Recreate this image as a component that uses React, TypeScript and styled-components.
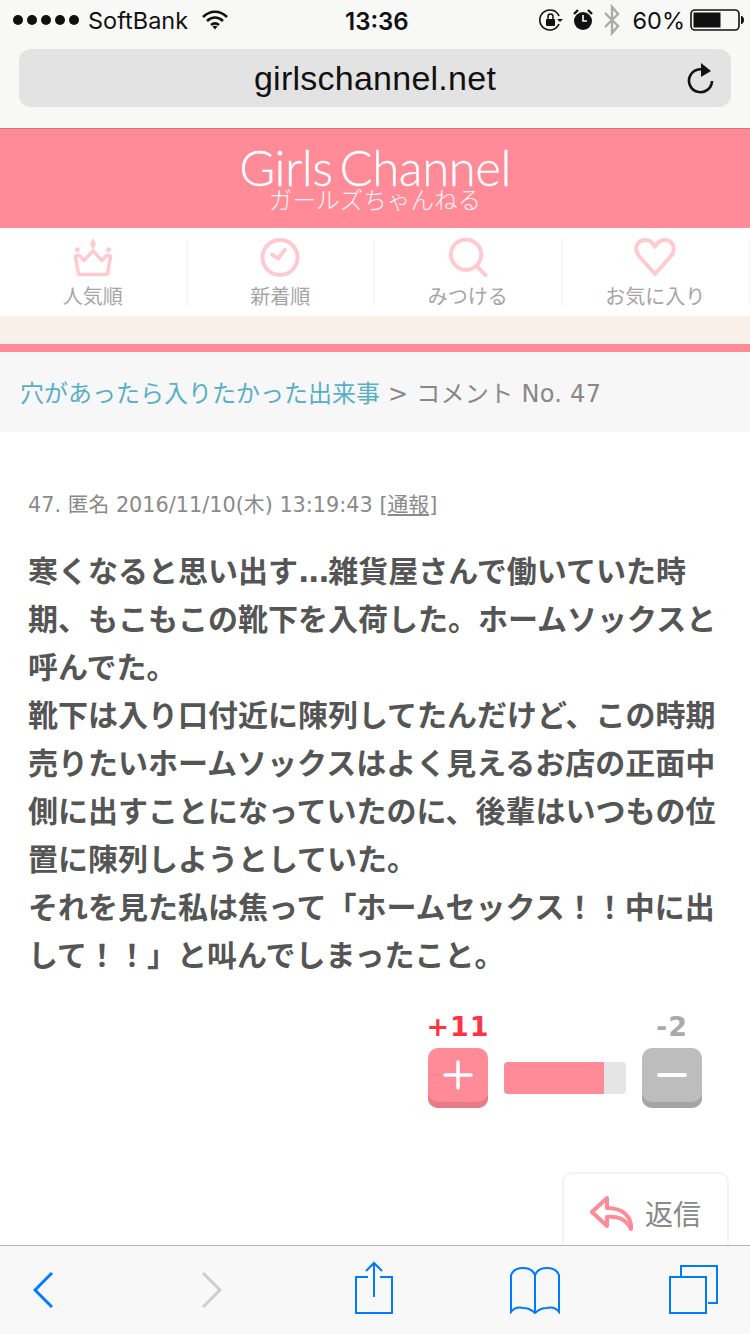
import React from "react";
import styled, { createGlobalStyle } from "styled-components";

const GlobalStyle = createGlobalStyle`
  html, body { margin: 0; padding: 0; background: #fff; }
  body { font-family: "DejaVu Sans", "Noto Sans CJK JP", sans-serif; }
`;

const Phone = styled.div`
  width: 750px;
  height: 1334px;
  display: flex;
  flex-direction: column;
  overflow: hidden;
`;

const BrowserTop = styled.header`
  height: 128px;
  background: #f8f8f6;
  flex: none;
`;

const StatusBar = styled.div`
  height: 40px;
  padding: 0 5px 0 13px;
  display: flex;
  align-items: center;
  position: relative;
  font-family: "Inter", "Liberation Sans", sans-serif;
  font-size: 23.5px;
  color: #111;
`;

const Signal = styled.div`
  display: flex;
  gap: 4px;
  margin-right: 9px;
`;

const Dot = styled.span`
  width: 10px;
  height: 10px;
  border-radius: 50%;
  background: #111;
`;

const Carrier = styled.span`
  width: 114px;
`;

const Clock = styled.span`
  position: absolute;
  left: 345px;
  top: 7px;
  font-weight: 600;
  font-size: 24px;
`;

const StatusRight = styled.div`
  margin-left: auto;
  display: flex;
  align-items: center;
`;

const Percent = styled.span`
  margin: 0 5px 0 12px;
`;

const AddressBar = styled.div`
  margin: 9px 19px 0;
  height: 58px;
  border-radius: 12px;
  background: #e3e3e3;
  display: flex;
  align-items: center;
  justify-content: center;
  position: relative;
  font-family: "Liberation Sans", sans-serif;
  font-size: 34px;
  letter-spacing: 0.25px;
  color: #111;
`;

const Reload = styled.svg`
  position: absolute;
  right: 16px;
  top: 12px;
`;

const Main = styled.main`
  flex: 1;
  min-height: 0;
  overflow: hidden;
`;

const Brand = styled.div`
  height: 100px;
  box-sizing: border-box;
  border-top: 1px solid #d9707d;
  background: #ff8b98;
  color: #fff;
  display: flex;
  flex-direction: column;
  align-items: center;
`;

const Logo = styled.div`
  font-family: "Lato", sans-serif;
  font-weight: 300;
  font-size: 49px;
  line-height: 40px;
  letter-spacing: -0.4px;
  word-spacing: -6px;
  margin-top: 18px;
  -webkit-text-stroke: 0.3px #fff;
`;

const LogoKana = styled.div`
  font-family: "Noto Sans CJK JP", sans-serif;
  font-weight: 300;
  font-size: 23.6px;
  line-height: 26px;
  margin-top: -1px;
  opacity: 0.9;
`;

const Nav = styled.nav`
  height: 88px;
  display: grid;
  grid-template-columns: repeat(4, 1fr);
  background: #fff;
`;

const NavItem = styled.div`
  height: 68px;
  margin-top: 10px;
  border-right: 2px solid #f8f8f8;
  display: flex;
  flex-direction: column;
  align-items: center;
  font-family: "Noto Sans CJK JP", sans-serif;
  font-size: 20px;
  line-height: 20px;
  color: #a5a5a5;
`;

const NavLabel = styled.span`
  margin-top: 9px;
`;

const CreamBand = styled.div`
  height: 28px;
  background: #f9f1e9;
`;

const PinkRule = styled.div`
  height: 8px;
  background: #ff8b98;
`;

const Breadcrumb = styled.div`
  height: 80px;
  box-sizing: border-box;
  padding: 24px 0 0 20px;
  background: #f7f7f7;
  font-size: 24px;
  line-height: 36px;
  color: #888;
  white-space: nowrap;
  letter-spacing: 0.3px;
`;

const TopicLink = styled.span`
  color: #5aafc8;
  letter-spacing: 0;
`;

const Comment = styled.section`
  padding: 56px 0 0 28px;
`;

const Meta = styled.div`
  font-size: 20.8px;
  line-height: 34px;
  color: #8a8a8a;
  white-space: nowrap;
`;

const Report = styled.span`
  text-decoration: underline;
`;

const Body = styled.div`
  margin-top: 26px;
  font-size: 30px;
  font-weight: 700;
  line-height: 48px;
  color: #555;
  white-space: nowrap;
`;

const Ellipsis = styled.span`
  letter-spacing: -1.3px;
`;

const Votes = styled.div`
  margin: 28px 48px 0 0;
  display: flex;
  justify-content: flex-end;
  align-items: flex-end;
  gap: 16px;
`;

const VoteColumn = styled.div`
  width: 60px;
  display: flex;
  flex-direction: column;
  align-items: center;
`;

const VoteCount = styled.span<{ $color: string }>`
  font-family: "DejaVu Sans", sans-serif;
  font-weight: 700;
  font-size: 27px;
  line-height: 38px;
  padding-bottom: 2px;
  letter-spacing: 1px;
  color: ${(p) => p.$color};
  white-space: nowrap;
`;

const VoteButton = styled.div<{ $face: string; $edge: string }>`
  width: 60px;
  height: 60px;
  box-sizing: border-box;
  padding-bottom: 6px;
  border-radius: 10px;
  background: ${(p) => p.$face};
  box-shadow: inset 0 -6px 0 ${(p) => p.$edge};
  display: flex;
  align-items: center;
  justify-content: center;
`;

const Meter = styled.div`
  width: 122px;
  height: 32px;
  margin-bottom: 14px;
  border-radius: 4px;
  overflow: hidden;
  background: #e5e5e5;
`;

const MeterFill = styled.div`
  height: 100%;
  background: #ff8b98;
`;

const ReplyRow = styled.div`
  margin: 64px 21px 0 0;
  display: flex;
  justify-content: flex-end;
`;

const ReplyButton = styled.div`
  width: 167px;
  height: 100px;
  box-sizing: border-box;
  border: 2px solid #f3f3f3;
  border-radius: 10px;
  padding: 19px 0 0 26px;
  display: flex;
  align-items: flex-start;
  gap: 11px;
  font-family: "Noto Sans CJK JP", sans-serif;
  font-size: 28px;
  line-height: 40px;
  color: #888;
`;

const ReplyIcon = styled.svg`
  margin-top: 3px;
  flex: none;
`;

const Toolbar = styled.footer`
  height: 89px;
  flex: none;
  box-sizing: border-box;
  border-top: 1px solid #b2b2b2;
  background: #f8f8f8;
  display: flex;
  align-items: flex-start;
`;

const ToolIcon = styled.svg<{ $gap: number; $top: number }>`
  margin-left: ${(p) => p.$gap}px;
  margin-top: ${(p) => p.$top}px;
  flex: none;
`;

const Crown = () => (
  <svg width="42" height="40" viewBox="0 0 42 40">
    <path d="M21 0l3 6-3 6-3-6z" fill="#ffc9cf" />
    <circle cx="5" cy="12" r="2.500" fill="#ffc9cf" />
    <circle cx="37" cy="12" r="2.500" fill="#ffc9cf" />
    <path d="M3 19c3-2 5-1 6 1l3 3 9-10 9 10 3-3c1-2 3-3 6-1l-3 17c0 1-1 1.500-2 1.500H8c-1 0-2-.5-2-1.500z" fill="none" stroke="#ffc9cf" strokeWidth="3.500" strokeLinejoin="round" />
  </svg>
);

const ClockIcon = () => (
  <svg width="42" height="40" viewBox="0 0 42 40">
    <circle cx="21" cy="20" r="18" fill="none" stroke="#ffc9cf" strokeWidth="4" />
    <path d="M13 17l6 4 7-9" fill="none" stroke="#ffc9cf" strokeWidth="4" strokeLinecap="round" strokeLinejoin="round" />
  </svg>
);

const SearchIcon = () => (
  <svg width="42" height="40" viewBox="0 0 42 40">
    <circle cx="19" cy="17" r="15.500" fill="none" stroke="#ffc9cf" strokeWidth="4" />
    <path d="M30 29l9 9" stroke="#ffc9cf" strokeWidth="4" strokeLinecap="round" />
  </svg>
);

const HeartIcon = () => (
  <svg width="44" height="40" viewBox="0 0 44 40">
    <path d="M22 37L6 19C0 12 3 2 12 2c5 0 8 3 10 7 2-4 5-7 10-7 9 0 12 10 6 17z" fill="none" stroke="#ffc9cf" strokeWidth="4" strokeLinejoin="round" />
  </svg>
);

const navItems = [
  { label: "人気順", icon: <Crown /> },
  { label: "新着順", icon: <ClockIcon /> },
  { label: "みつける", icon: <SearchIcon /> },
  { label: "お気に入り", icon: <HeartIcon /> },
];

const commentLines = [
  "期、もこもこの靴下を入荷した。ホームソックスと",
  "呼んでた。",
  "靴下は入り口付近に陳列してたんだけど、この時期",
  "売りたいホームソックスはよく見えるお店の正面中",
  "側に出すことになっていたのに、後輩はいつもの位",
  "置に陳列しようとしていた。",
  "それを見た私は焦って「ホームセックス！！中に出",
  "して！！」と叫んでしまったこと。",
];

export default function App() {
  const plus = 11;
  const minus = 2;
  const barShare = 82;

  return (
    <Phone>
      <GlobalStyle />
      <BrowserTop>
        <StatusBar>
          <Signal>
            {[0, 1, 2, 3, 4].map((i) => (
              <Dot key={i} />
            ))}
          </Signal>
          <Carrier>SoftBank</Carrier>
          <svg width="26" height="20" viewBox="0 0 26 20">
            <path d="M1 7c7-7 17-7 24 0M5 11c5-4.500 11-4.500 16 0M9 15c2.500-2 5.500-2 8 0" fill="none" stroke="#111" strokeWidth="2.600" />
            <path d="M10.500 16.500c1.500-1 3.500-1 5 0L13 19.500z" fill="#111" />
          </svg>
          <Clock>13:36</Clock>
          <StatusRight>
            <svg width="24" height="24" viewBox="0 0 24 24">
              <path d="M20 8A10 10 0 1 0 20 16" fill="none" stroke="#111" strokeWidth="1.600" />
              <path d="M18 11h6l-3 3z" fill="#111" />
              <rect x="7" y="11" width="9" height="7" rx="1" fill="#111" />
              <path d="M9 11V8.500a2.500 2.500 0 0 1 5 0V11" fill="none" stroke="#111" strokeWidth="1.500" />
            </svg>
            <svg width="22" height="24" viewBox="0 0 22 24" style={{ marginLeft: 9 }}>
              <circle cx="11" cy="13" r="9" fill="#111" />
              <path d="M11 7v6h4" fill="none" stroke="#fff" strokeWidth="1.600" />
              <path d="M2 6l4-4M20 6l-4-4" stroke="#111" strokeWidth="2.400" />
            </svg>
            <svg width="18" height="32" viewBox="0 0 18 32" style={{ marginLeft: 9 }}>
              <path d="M2 9l13 13-6 7V3l6 7L2 23" fill="none" stroke="#aaa" strokeWidth="2.400" />
            </svg>
            <Percent>60%</Percent>
            <svg width="55" height="22" viewBox="0 0 55 22">
              <rect x="1" y="1" width="48" height="20" rx="4" fill="none" stroke="#111" strokeWidth="1.600" />
              <rect x="3.500" y="3.500" width="27" height="15" fill="#111" />
              <path d="M51 7c2 0 3 2 3 4s-1 4-3 4z" fill="#111" />
            </svg>
          </StatusRight>
        </StatusBar>
        <AddressBar>
          girlschannel.net
          <Reload width="28" height="34" viewBox="0 0 28 34">
            <path d="M21 11A11.500 11.500 0 1 0 25 20" fill="none" stroke="#111" strokeWidth="2.600" />
            <path d="M14 2l10 8-10 6z" fill="#111" />
          </Reload>
        </AddressBar>
      </BrowserTop>

      <Main>
        <Brand>
          <Logo>Girls Channel</Logo>
          <LogoKana>ガールズちゃんねる</LogoKana>
        </Brand>
        <Nav>
          {navItems.map((item) => (
            <NavItem key={item.label}>
              {item.icon}
              <NavLabel>{item.label}</NavLabel>
            </NavItem>
          ))}
        </Nav>
        <CreamBand />
        <PinkRule />
        <Breadcrumb>
          <TopicLink>穴があったら入りたかった出来事</TopicLink> &gt; コメント No. 47
        </Breadcrumb>
        <Comment>
          <Meta>
            47. 匿名 2016/11/10(木) 13:19:43 [<Report>通報</Report>]
          </Meta>
          <Body>
            <div>
              寒くなると思い出す<Ellipsis>...</Ellipsis>雑貨屋さんで働いていた時
            </div>
            {commentLines.map((line) => (
              <div key={line}>{line}</div>
            ))}
          </Body>
          <Votes>
            <VoteColumn>
              <VoteCount $color="#ff3344">+{plus}</VoteCount>
              <VoteButton $face="#ff8b98" $edge="#e87a87">
                <svg width="30" height="30" viewBox="0 0 30 30">
                  <path d="M15 2v26M2 15h26" stroke="#fff" strokeWidth="3.500" strokeLinecap="round" />
                </svg>
              </VoteButton>
            </VoteColumn>
            <Meter>
              <MeterFill style={{ width: `${barShare}%` }} />
            </Meter>
            <VoteColumn>
              <VoteCount $color="#aaaaaa">-{minus}</VoteCount>
              <VoteButton $face="#bdbdbd" $edge="#a5a5a5">
                <svg width="30" height="30" viewBox="0 0 30 30">
                  <path d="M2 15h26" stroke="#fff" strokeWidth="4" strokeLinecap="round" />
                </svg>
              </VoteButton>
            </VoteColumn>
          </Votes>
          <ReplyRow>
            <ReplyButton>
              <ReplyIcon width="44" height="36" viewBox="0 0 44 36">
                <path d="M17 2L2 16l15 14v-9c10-1 18 1 24 12 1-12-8-21-24-21z" fill="none" stroke="#ff8b98" strokeWidth="4" strokeLinejoin="round" />
              </ReplyIcon>
              返信
            </ReplyButton>
          </ReplyRow>
        </Comment>
      </Main>

      <Toolbar>
        <ToolIcon $gap={33} $top={26} width="20" height="36" viewBox="0 0 20 36">
          <path d="M19 1L2 18l17 17" fill="none" stroke="#007aff" strokeWidth="3" />
        </ToolIcon>
        <ToolIcon $gap={149} $top={26} width="20" height="36" viewBox="0 0 20 36">
          <path d="M1 1l17 17L1 35" fill="none" stroke="#cdcdcd" strokeWidth="3" />
        </ToolIcon>
        <ToolIcon $gap={133} $top={15} width="38" height="53" viewBox="0 0 38 53">
          <path d="M13 16H1v36h36V16H25M19 36V2M11 10l8-8 8 8" fill="none" stroke="#007aff" strokeWidth="2" />
        </ToolIcon>
        <ToolIcon $gap={117} $top={20} width="50" height="48" viewBox="0 0 50 48">
          <path d="M25 47V9c-2-5-7-7-12-7S3 4 1 9v37c3-4 8-5 12-4 5 0 9 2 12 5 3-3 7-5 12-5 4-1 9 0 12 4V9c-2-5-7-7-12-7s-10 2-12 7" fill="none" stroke="#007aff" strokeWidth="2" />
        </ToolIcon>
        <ToolIcon $gap={109} $top={19} width="50" height="50" viewBox="0 0 50 50">
          <path d="M12 11V1h36v37h-9" fill="none" stroke="#007aff" strokeWidth="2" />
          <rect x="1" y="12" width="36" height="36" fill="none" stroke="#007aff" strokeWidth="2" />
        </ToolIcon>
      </Toolbar>
    </Phone>
  );
}
